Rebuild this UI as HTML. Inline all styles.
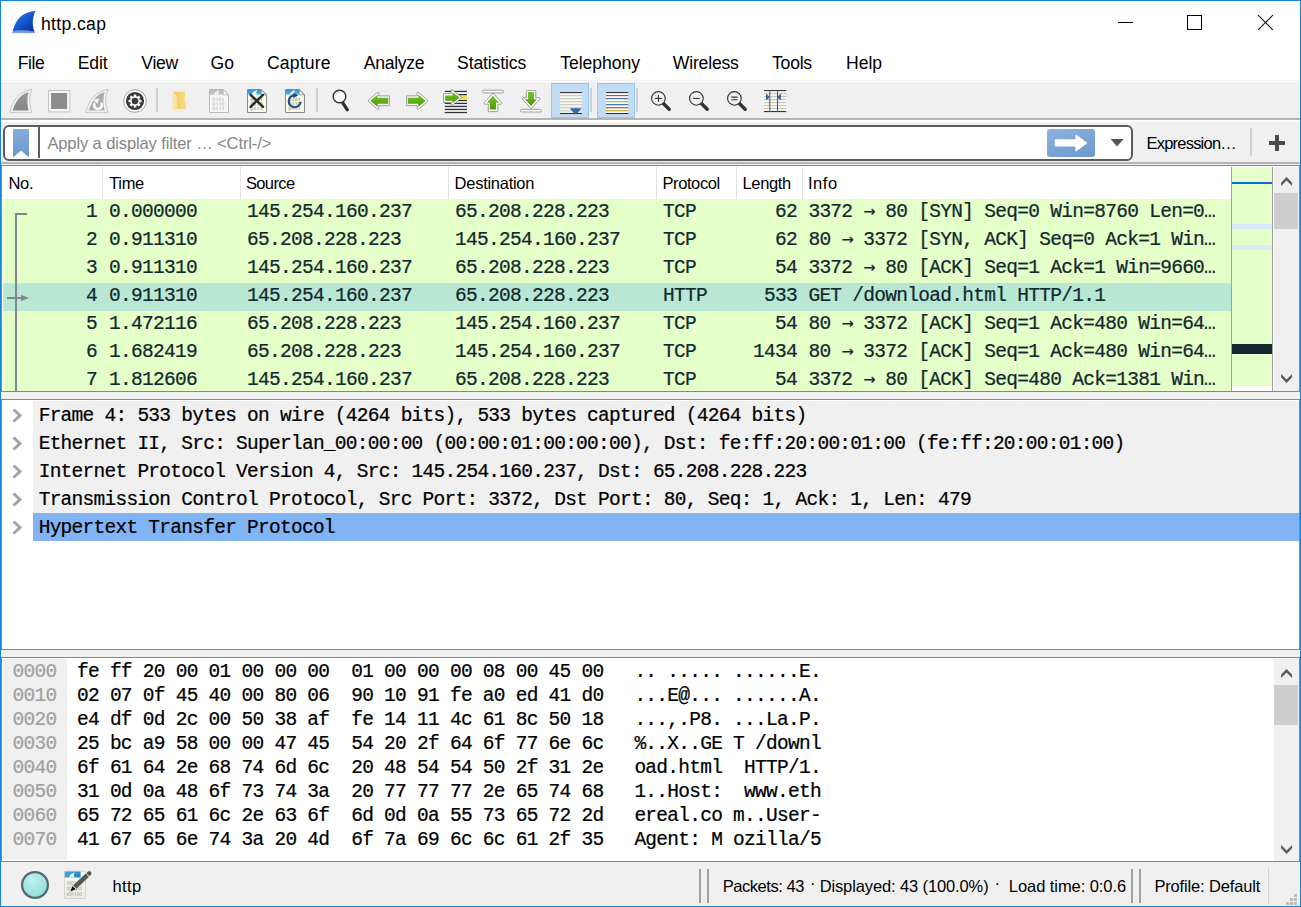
<!DOCTYPE html><html><head><meta charset="utf-8"><title>http.cap</title><style>
*{box-sizing:border-box;margin:0;padding:0}
html,body{width:1301px;height:907px;overflow:hidden;background:#f0f0f0}
body{position:relative;font-family:"Liberation Sans",sans-serif;color:#000}
.abs{position:absolute}
#win{position:absolute;left:0;top:0;width:1301px;height:907px;border:1px solid #1883d7;background:#f0f0f0}
#title{position:absolute;left:1px;top:1px;width:1299px;height:44px;background:#fff}
#menu{position:absolute;left:1px;top:45px;width:1299px;height:36px;background:#fff}
.mt{position:absolute;white-space:pre;font-size:17.6px;line-height:20px}
.ui{position:absolute;white-space:pre;font-size:16.5px;line-height:20px}
.mono{font-family:"Liberation Mono","DejaVu Sans Mono",monospace;font-size:19.5px;letter-spacing:-0.734px;white-space:pre;-webkit-text-stroke:0.22px}
.frame{position:absolute;left:1px;width:1299px;border:1px solid #828790;background:#fff}
.row{position:absolute;left:0;height:28px;line-height:28px}
.prow{position:absolute;left:3px;width:1228px;height:28px;background:#e4ffc7;color:#12272e}
.prow span{position:absolute;top:0;height:28px;line-height:26px}
.prow i{font-style:normal;position:relative;top:-0.5px;font-family:"DejaVu Sans Mono","Liberation Mono",monospace;font-size:20px;line-height:10px;letter-spacing:-1.05px;-webkit-text-stroke:0}
.sep{position:absolute;width:1px;background:#e2e2e2;top:167px;height:32px}
</style></head><body>
<div id="win"></div>
<div id="title"></div>
<span class="mt" style="left:41.0px;top:14px;letter-spacing:0.334px">http.cap</span>
<svg class="abs" style="left:12px;top:11px" width="24" height="23" viewBox="0 0 24 23"><defs><linearGradient id="tig" x1="0.1" y1="0.1" x2="0.9" y2="0.95"><stop offset="0" stop-color="#3488f0"/><stop offset="0.45" stop-color="#1458d0"/><stop offset="1" stop-color="#08309a"/></linearGradient></defs><path d="M23.4 0 C15 0.6 9.5 3.8 6 8.5 C3 12.5 1.2 17 0.4 22 L22.9 22 C20.6 16.5 20.2 11 21.3 6.5 C21.8 4 22.5 2 23.4 0 Z" fill="url(#tig)"/><path d="M0.9 20 C6 18.7 16 19 22.3 20.4 L22.9 22 L0.4 22 Z" fill="#b4cdf0" opacity="0.6"/><path d="M0.4 21.4 L22.8 21.4 L22.9 22.3 L0.3 22.3 Z" fill="#8fb0e4" opacity="0.8"/></svg><div class="abs" style="left:1118px;top:22px;width:15px;height:1px;background:#000"></div>
<div class="abs" style="left:1187px;top:15px;width:15px;height:15px;border:1px solid #000"></div>
<svg class="abs" style="left:1257px;top:14px" width="17" height="17" viewBox="0 0 17 17"><path d="M1 1 L16 16 M16 1 L1 16" stroke="#000" stroke-width="1.05" fill="none"/></svg>
<div id="menu">
</div>
<span class="mt" style="left:17.7px;top:52.5px;letter-spacing:-0.42px">File</span>
<span class="mt" style="left:77.8px;top:52.5px;letter-spacing:-0.18px">Edit</span>
<span class="mt" style="left:141.35px;top:52.5px;letter-spacing:-0.3px">View</span>
<span class="mt" style="left:210.5px;top:52.5px;letter-spacing:0.18px">Go</span>
<span class="mt" style="left:267.0px;top:52.5px;letter-spacing:0.15px">Capture</span>
<span class="mt" style="left:363.85px;top:52.5px;letter-spacing:-0.3px">Analyze</span>
<span class="mt" style="left:457.05px;top:52.5px;letter-spacing:-0.14px">Statistics</span>
<span class="mt" style="left:560.25px;top:52.5px;letter-spacing:-0.044px">Telephony</span>
<span class="mt" style="left:672.85px;top:52.5px;letter-spacing:-0.205px">Wireless</span>
<span class="mt" style="left:772.1px;top:52.5px;letter-spacing:-0.27px">Tools</span>
<span class="mt" style="left:846.05px;top:52.5px;letter-spacing:-0.06px">Help</span>
<div class="abs" style="left:1px;top:80px;width:1299px;height:1px;background:#f0f0f0"></div>
<div class="abs" style="left:1px;top:81px;width:1299px;height:1px;background:#fff"></div>
<div class="abs" style="left:1px;top:118px;width:1299px;height:2px;background:#b5b5b5"></div>
<div class="abs" style="left:1px;top:120px;width:1299px;height:2px;background:#fefefe"></div>
<div class="abs" style="left:1px;top:162px;width:1299px;height:2px;background:#b5b5b5"></div>
<svg class="abs" style="left:9px;top:89px" width="24" height="24" viewBox="0 0 24 24"><defs><linearGradient id="fg1" x1="0" y1="0" x2="0" y2="1"><stop offset="0" stop-color="#9a9a9a"/><stop offset="1" stop-color="#858585"/></linearGradient></defs><path d="M23 0.3 C11.5 2.4 3.6 10.5 0.8 23.4 L23 23.4 C20 15.5 19.8 8 23 0.3 Z" fill="#f4f4f4" stroke="#c4c4c4" stroke-width="1"/><path d="M19.6 2.9 C12 5.2 6.4 11.8 3.8 21.4 L19.6 21.4 C18 15 18 8.8 19.6 2.9 Z" fill="url(#fg1)"/></svg>
<svg class="abs" style="left:48px;top:90px" width="24" height="24" viewBox="0 0 24 24"><rect x="0.5" y="0.5" width="21.4" height="21.4" fill="#f6f6f6" stroke="#c6c6c6"/><rect x="3.1" y="3" width="16" height="16" fill="#8c8c8c"/></svg>
<svg class="abs" style="left:85px;top:89px" width="24" height="24" viewBox="0 0 24 24"><path d="M23 0.3 C11.5 2.4 3.6 10.5 0.8 23.4 L23 23.4 C20 15.5 19.8 8 23 0.3 Z" fill="#f4f4f4" stroke="#c4c4c4" stroke-width="1"/><path d="M19.6 2.9 C12 5.2 6.4 11.8 3.8 21.4 L19.6 21.4 C18 15 18 8.8 19.6 2.9 Z" fill="#ababab"/><path d="M15.87 13.79 A3.75 3.75 0 1 1 9.93 14.05" fill="none" stroke="#f8f8f8" stroke-width="2.7"/><path d="M7.4 10.9 L14 9.4 L12.9 14.6 Z" fill="#f8f8f8"/></svg>
<svg class="abs" style="left:123px;top:89px" width="24" height="24" viewBox="0 0 24 24"><circle cx="12" cy="12" r="11.3" fill="#fdfdfd" stroke="#9a9a9a" stroke-width="0.9"/><circle cx="12" cy="12" r="9.1" fill="#3a3a3a"/><rect  x="10.75"  y="5.5" width="2.5" height="3.4" rx="0.5" fill="#fff" transform="rotate(0 12.0 12.0)"/><rect  x="10.75"  y="5.5" width="2.5" height="3.4" rx="0.5" fill="#fff" transform="rotate(45 12.0 12.0)"/><rect  x="10.75"  y="5.5" width="2.5" height="3.4" rx="0.5" fill="#fff" transform="rotate(90 12.0 12.0)"/><rect  x="10.75"  y="5.5" width="2.5" height="3.4" rx="0.5" fill="#fff" transform="rotate(135 12.0 12.0)"/><rect  x="10.75"  y="5.5" width="2.5" height="3.4" rx="0.5" fill="#fff" transform="rotate(180 12.0 12.0)"/><rect  x="10.75"  y="5.5" width="2.5" height="3.4" rx="0.5" fill="#fff" transform="rotate(225 12.0 12.0)"/><rect  x="10.75"  y="5.5" width="2.5" height="3.4" rx="0.5" fill="#fff" transform="rotate(270 12.0 12.0)"/><rect  x="10.75"  y="5.5" width="2.5" height="3.4" rx="0.5" fill="#fff" transform="rotate(315 12.0 12.0)"/><circle cx="12" cy="12" r="4.8" fill="#fff"/><circle cx="12" cy="12" r="3.3" fill="#3a3a3a"/></svg>
<div class="abs" style="left:156px;top:88px;width:2px;height:24px;background:#cfcfcf"></div>
<svg class="abs" style="left:172px;top:91px" width="15" height="22" viewBox="0 0 15 22"><defs><linearGradient id="fdg" x1="0" y1="0" x2="1" y2="0"><stop offset="0" stop-color="#efcb60"/><stop offset="1" stop-color="#fbdc7e"/></linearGradient></defs><path d="M0.9 0.8 L12.9 0.8 L12.9 11.2 L14 11.2 L14 17.9 L0.9 17.9 Z" fill="url(#fdg)"/><path d="M0.9 1 L4.9 4.4 L4.9 17.7 L4.1 20.9 L0.9 18.4 Z" fill="#fbe59e"/></svg>
<svg class="abs" style="left:209px;top:89px" width="20" height="24" viewBox="0 0 20 24"><defs><linearGradient id="svg" x1="0" y1="0" x2="0" y2="1"><stop offset="0" stop-color="#b6b6b6"/><stop offset="1" stop-color="#c6c6c6"/></linearGradient><clipPath id="svc"><path d="M0.5 0.5 L14.2 0.5 L19.5 5.8 L19.5 23.5 L0.5 23.5 Z"/></clipPath></defs><path d="M0.5 0.5 L14.2 0.5 L19.5 5.8 L19.5 23.5 L0.5 23.5 Z" fill="#f6f6f6"/><g clip-path="url(#svc)"><rect x="0" y="0" width="20" height="5.6" fill="url(#svg)"/><path d="M4.6 5.6 C5.6 3.2 7.6 1.6 10.2 0.9 C9.2 2.6 9.2 4.2 10 5.6 Z" fill="#f6f6f6"/></g><path d="M14.2 0.5 L14.2 5.8 L19.5 5.8 Z" fill="#fdfdfd" stroke="#b9b9b9" stroke-width="0.8"/><rect x="4.0" y="8.9" width="1.9" height="3" rx="0.8" fill="none" stroke="#bcbcbc" stroke-width="0.7" opacity="1"/><rect x="7.6499999999999995" y="8.700000000000001" width="0.8" height="3.4" fill="#bcbcbc" opacity="1"/><rect x="10.1" y="8.9" width="1.9" height="3" rx="0.8" fill="none" stroke="#bcbcbc" stroke-width="0.7" opacity="1"/><rect x="13.749999999999998" y="8.700000000000001" width="0.8" height="3.4" fill="#bcbcbc" opacity="1"/><rect x="4.0" y="13.4" width="1.9" height="3" rx="0.8" fill="none" stroke="#bcbcbc" stroke-width="0.7" opacity="1"/><rect x="7.6499999999999995" y="13.200000000000001" width="0.8" height="3.4" fill="#bcbcbc" opacity="1"/><rect x="10.7" y="13.200000000000001" width="0.8" height="3.4" fill="#bcbcbc" opacity="1"/><rect x="13.149999999999999" y="13.4" width="1.9" height="3" rx="0.8" fill="none" stroke="#bcbcbc" stroke-width="0.7" opacity="1"/><rect x="4.0" y="17.9" width="1.9" height="3" rx="0.8" fill="none" stroke="#bcbcbc" stroke-width="0.7" opacity="1"/><rect x="7.6499999999999995" y="17.7" width="0.8" height="3.4" fill="#bcbcbc" opacity="1"/><rect x="10.7" y="17.7" width="0.8" height="3.4" fill="#bcbcbc" opacity="1"/><rect x="13.749999999999998" y="17.7" width="0.8" height="3.4" fill="#bcbcbc" opacity="1"/><path d="M0.5 0.5 L14.2 0.5 L19.5 5.8 L19.5 23.5 L0.5 23.5 Z" fill="none" stroke="#b9b9b9" stroke-width="1"/></svg>
<svg class="abs" style="left:247px;top:89px" width="20" height="24" viewBox="0 0 20 24"><defs><linearGradient id="clg" x1="0" y1="0" x2="0" y2="1"><stop offset="0" stop-color="#2a8bd6"/><stop offset="1" stop-color="#57b0ea"/></linearGradient><clipPath id="clc"><path d="M0.5 0.5 L14.2 0.5 L19.5 5.8 L19.5 23.5 L0.5 23.5 Z"/></clipPath></defs><path d="M0.5 0.5 L14.2 0.5 L19.5 5.8 L19.5 23.5 L0.5 23.5 Z" fill="#fbfbea"/><g clip-path="url(#clc)"><rect x="0" y="0" width="20" height="5.6" fill="url(#clg)"/><path d="M4.6 5.6 C5.6 3.2 7.6 1.6 10.2 0.9 C9.2 2.6 9.2 4.2 10 5.6 Z" fill="#fbfbea"/></g><path d="M14.2 0.5 L14.2 5.8 L19.5 5.8 Z" fill="#fdfdfd" stroke="#8a8a86" stroke-width="0.8"/><rect x="4.0" y="8.9" width="1.9" height="3" rx="0.8" fill="none" stroke="#9a9a90" stroke-width="0.7" opacity="1"/><rect x="7.6499999999999995" y="8.700000000000001" width="0.8" height="3.4" fill="#9a9a90" opacity="1"/><rect x="10.1" y="8.9" width="1.9" height="3" rx="0.8" fill="none" stroke="#9a9a90" stroke-width="0.7" opacity="1"/><rect x="13.749999999999998" y="8.700000000000001" width="0.8" height="3.4" fill="#9a9a90" opacity="1"/><rect x="4.0" y="13.4" width="1.9" height="3" rx="0.8" fill="none" stroke="#9a9a90" stroke-width="0.7" opacity="1"/><rect x="7.6499999999999995" y="13.200000000000001" width="0.8" height="3.4" fill="#9a9a90" opacity="1"/><rect x="10.7" y="13.200000000000001" width="0.8" height="3.4" fill="#9a9a90" opacity="1"/><rect x="13.149999999999999" y="13.4" width="1.9" height="3" rx="0.8" fill="none" stroke="#9a9a90" stroke-width="0.7" opacity="1"/><rect x="4.0" y="17.9" width="1.9" height="3" rx="0.8" fill="none" stroke="#9a9a90" stroke-width="0.7" opacity="1"/><rect x="7.6499999999999995" y="17.7" width="0.8" height="3.4" fill="#9a9a90" opacity="1"/><rect x="10.7" y="17.7" width="0.8" height="3.4" fill="#9a9a90" opacity="1"/><rect x="13.749999999999998" y="17.7" width="0.8" height="3.4" fill="#9a9a90" opacity="1"/><path d="M0.5 0.5 L14.2 0.5 L19.5 5.8 L19.5 23.5 L0.5 23.5 Z" fill="none" stroke="#8a8a86" stroke-width="1"/><path d="M3.6 5.8 L16 17.8 M16 5.8 L3.6 17.8" stroke="#2a2e30" stroke-width="2.5" stroke-linecap="round"/></svg>
<svg class="abs" style="left:285px;top:89px" width="20" height="24" viewBox="0 0 20 24"><defs><linearGradient id="rlg" x1="0" y1="0" x2="0" y2="1"><stop offset="0" stop-color="#2a8bd6"/><stop offset="1" stop-color="#57b0ea"/></linearGradient><clipPath id="rlc"><path d="M0.5 0.5 L14.2 0.5 L19.5 5.8 L19.5 23.5 L0.5 23.5 Z"/></clipPath></defs><path d="M0.5 0.5 L14.2 0.5 L19.5 5.8 L19.5 23.5 L0.5 23.5 Z" fill="#fbfbea"/><g clip-path="url(#rlc)"><rect x="0" y="0" width="20" height="5.6" fill="url(#rlg)"/><path d="M4.6 5.6 C5.6 3.2 7.6 1.6 10.2 0.9 C9.2 2.6 9.2 4.2 10 5.6 Z" fill="#fbfbea"/></g><path d="M14.2 0.5 L14.2 5.8 L19.5 5.8 Z" fill="#fdfdfd" stroke="#8a8a86" stroke-width="0.8"/><rect x="4.0" y="8.9" width="1.9" height="3" rx="0.8" fill="none" stroke="#9a9a90" stroke-width="0.7" opacity="1"/><rect x="7.6499999999999995" y="8.700000000000001" width="0.8" height="3.4" fill="#9a9a90" opacity="1"/><rect x="10.1" y="8.9" width="1.9" height="3" rx="0.8" fill="none" stroke="#9a9a90" stroke-width="0.7" opacity="1"/><rect x="13.749999999999998" y="8.700000000000001" width="0.8" height="3.4" fill="#9a9a90" opacity="1"/><rect x="4.0" y="13.4" width="1.9" height="3" rx="0.8" fill="none" stroke="#9a9a90" stroke-width="0.7" opacity="1"/><rect x="7.6499999999999995" y="13.200000000000001" width="0.8" height="3.4" fill="#9a9a90" opacity="1"/><rect x="10.7" y="13.200000000000001" width="0.8" height="3.4" fill="#9a9a90" opacity="1"/><rect x="13.149999999999999" y="13.4" width="1.9" height="3" rx="0.8" fill="none" stroke="#9a9a90" stroke-width="0.7" opacity="1"/><rect x="4.0" y="17.9" width="1.9" height="3" rx="0.8" fill="none" stroke="#9a9a90" stroke-width="0.7" opacity="1"/><rect x="7.6499999999999995" y="17.7" width="0.8" height="3.4" fill="#9a9a90" opacity="1"/><rect x="10.7" y="17.7" width="0.8" height="3.4" fill="#9a9a90" opacity="1"/><rect x="13.749999999999998" y="17.7" width="0.8" height="3.4" fill="#9a9a90" opacity="1"/><path d="M0.5 0.5 L14.2 0.5 L19.5 5.8 L19.5 23.5 L0.5 23.5 Z" fill="none" stroke="#8a8a86" stroke-width="1"/><path d="M15.68 12.72 A6 6 0 1 1 9.4 6.2" fill="none" stroke="#204a87" stroke-width="2.1"/><path d="M8.4 3.4 L13.2 6.6 L8 9 Z" fill="#204a87"/></svg>
<div class="abs" style="left:316px;top:88px;width:2px;height:24px;background:#cfcfcf"></div>
<svg class="abs" style="left:331px;top:88px" width="22" height="25" viewBox="0 0 22 25"><path d="M11.6 14.6 L16.2 21.6" stroke="#2e3436" stroke-width="3.4" stroke-linecap="round"/><circle cx="8.5" cy="8.5" r="6.3" fill="#fbfbfb" stroke="#2e3436" stroke-width="1.4"/><path d="M4.6 7.4 A4.2 4.2 0 0 1 8.2 4.3" fill="none" stroke="#cfcfcf" stroke-width="1"/></svg>
<svg class="abs" style="left:368px;top:91px" width="23" height="20" viewBox="0 0 23 20"><defs><linearGradient id="alg" x1="0" y1="0" x2="0" y2="1"><stop offset="0" stop-color="#76c32c"/><stop offset="1" stop-color="#4e9a06"/></linearGradient></defs><g transform="translate(22,0) scale(-1,1)"><path d="M0.6 4.9 L11.2 4.9 L11.2 1.6 Q11.4 0.6 12.4 1.4 L21.6 9.1 Q22.2 9.8 21.6 10.4 L12.4 18.2 Q11.4 18.9 11.2 17.9 L11.2 14.7 L0.6 14.7 Z" fill="#fff" stroke="#909090" stroke-width="0.9" stroke-linejoin="round"/><path d="M1.8 6.8 L12.3 6.8 L12.3 3.5 L19.8 9.75 L12.3 16 L12.3 12.8 L1.8 12.8 Z" fill="url(#alg)"/></g></svg>
<svg class="abs" style="left:406px;top:91px" width="23" height="20" viewBox="0 0 23 20"><defs><linearGradient id="arg" x1="0" y1="0" x2="0" y2="1"><stop offset="0" stop-color="#76c32c"/><stop offset="1" stop-color="#4e9a06"/></linearGradient></defs><g><path d="M0.6 4.9 L11.2 4.9 L11.2 1.6 Q11.4 0.6 12.4 1.4 L21.6 9.1 Q22.2 9.8 21.6 10.4 L12.4 18.2 Q11.4 18.9 11.2 17.9 L11.2 14.7 L0.6 14.7 Z" fill="#fff" stroke="#909090" stroke-width="0.9" stroke-linejoin="round"/><path d="M1.8 6.8 L12.3 6.8 L12.3 3.5 L19.8 9.75 L12.3 16 L12.3 12.8 L1.8 12.8 Z" fill="url(#arg)"/></g></svg>
<svg class="abs" style="left:443px;top:89px" width="25" height="25" viewBox="0 0 25 25"><rect x="1.8" y="1.7999999999999998" width="22.2" height="1.25" fill="#2e3436"/><rect x="1.8" y="5.0" width="22.2" height="1.25" fill="#2e3436"/><rect x="1.8" y="7.9" width="22.2" height="1.25" fill="#2e3436"/><rect x="1.8" y="10.9" width="22.2" height="1.25" fill="#2e3436"/><rect x="1.8" y="13.8" width="22.2" height="1.25" fill="#2e3436"/><rect x="1.8" y="16.799999999999997" width="22.2" height="1.25" fill="#2e3436"/><rect x="1.8" y="19.799999999999997" width="22.2" height="1.25" fill="#2e3436"/><rect x="1.8" y="22.9" width="22.2" height="1.25" fill="#2e3436"/><rect x="14" y="7.2" width="10" height="2.6" fill="#f7e03c"/><defs><linearGradient id="gtg" x1="0" y1="0" x2="0" y2="1"><stop offset="0" stop-color="#76c32c"/><stop offset="1" stop-color="#4e9a06"/></linearGradient></defs><path d="M0.5 4.7 L8.2 4.7 L8.2 1.2 Q8.4 0.2 9.4 0.9 L18.3 7.9 Q18.9 8.5 18.3 9.1 L9.4 16.2 Q8.4 16.9 8.2 15.9 L8.2 13.6 L0.5 13.6 Z" fill="#fff" stroke="#909090" stroke-width="0.9" stroke-linejoin="round"/><path d="M2.2 6.5 L9.4 6.5 L9.4 3 L16.8 8.5 L9.4 14.2 L9.4 11.7 L2.2 11.7 Z" fill="url(#gtg)"/></svg>
<svg class="abs" style="left:482px;top:89px" width="22" height="24" viewBox="0 0 22 24"><defs><linearGradient id="gfg" x1="0" y1="0" x2="0" y2="1"><stop offset="0" stop-color="#76c32c"/><stop offset="1" stop-color="#4e9a06"/></linearGradient></defs><path d="M10.9 4 L19.8 13.6 Q20.4 15.2 19 15.2 L15.9 15.2 L15.9 21.8 Q15.9 22.7 15 22.7 L7.2 22.7 Q6.3 22.7 6.3 21.8 L6.3 15.2 L3 15.2 Q1.6 15.2 2.2 13.6 Z" fill="#fff" stroke="#909090" stroke-width="0.9" stroke-linejoin="round"/><path d="M10.9 6.8 L17 13.7 L14.1 13.7 L14.1 20.6 L7.8 20.6 L7.8 13.7 L4.9 13.7 Z" fill="url(#gfg)"/><rect x="0.5" y="1.2" width="21" height="2.7" rx="1.35" fill="#fff" stroke="#909090" stroke-width="0.9"/></svg>
<svg class="abs" style="left:520px;top:90px" width="22" height="23" viewBox="0 0 22 23"><defs><linearGradient id="glg" x1="0" y1="0" x2="0" y2="1"><stop offset="0" stop-color="#76c32c"/><stop offset="1" stop-color="#4e9a06"/></linearGradient></defs><path d="M7.2 0.4 L14.9 0.4 Q15.8 0.4 15.8 1.3 L15.8 7.8 L19 7.8 Q20.4 7.8 19.8 9.2 L11.1 18.6 L2.4 9.2 Q1.8 7.8 3.2 7.8 L6.3 7.8 L6.3 1.3 Q6.3 0.4 7.2 0.4 Z" fill="#fff" stroke="#909090" stroke-width="0.9" stroke-linejoin="round"/><path d="M8.1 2.1 L13.9 2.1 L13.9 9.2 L17.1 9.2 L11.1 16 L4.9 9.2 L8.1 9.2 Z" fill="url(#glg)"/><rect x="0.5" y="19.3" width="21" height="2.7" rx="1.35" fill="#fff" stroke="#909090" stroke-width="0.9"/></svg>
<div class="abs" style="left:551px;top:83px;width:38px;height:35px;background:#c2dcf3;border:1px solid #90c8f6"></div>
<svg class="abs" style="left:560px;top:91px" width="22" height="24" viewBox="0 0 22 24"><rect x="0" y="1" width="22" height="21.4" fill="#f6f6f4"/><rect x="0" y="1.05" width="22" height="1.1" fill="#2e3436"/><rect x="0" y="4.05" width="22" height="1.1" fill="#c6c6bc"/><rect x="0" y="7.1000000000000005" width="22" height="1.1" fill="#c6c6bc"/><rect x="0" y="10.149999999999999" width="22" height="1.1" fill="#c6c6bc"/><rect x="0" y="13.149999999999999" width="22" height="1.1" fill="#c6c6bc"/><rect x="0" y="16.2" width="22" height="1.1" fill="#c6c6bc"/><rect x="0" y="19.25" width="22" height="1.1" fill="#c6c6bc"/><rect x="0" y="21.95" width="22" height="1.1" fill="#2e3436"/><path d="M10.1 17.2 L21.3 17.2 C20.6 19.4 18.4 19.8 17.4 22.6 L14 22.6 C13 19.8 10.8 19.4 10.1 17.2 Z" fill="#3465a4"/></svg>
<div class="abs" style="left:590px;top:88px;width:2px;height:24px;background:#cfcfcf"></div>
<div class="abs" style="left:597px;top:83px;width:38px;height:35px;background:#c2dcf3;border:1px solid #90c8f6"></div>
<svg class="abs" style="left:606px;top:91px" width="23" height="24" viewBox="0 0 23 24"><rect x="0" y="1" width="22.4" height="21.4" fill="#fff"/><rect x="0" y="1.05" width="22.4" height="1.1" fill="#2e3436"/><rect x="0" y="4.05" width="22.4" height="1.1" fill="#ef2929"/><rect x="0" y="7.1000000000000005" width="22.4" height="1.1" fill="#3465a4"/><rect x="0" y="10.149999999999999" width="22.4" height="1.1" fill="#73d216"/><rect x="0" y="13.149999999999999" width="22.4" height="1.1" fill="#3465a4"/><rect x="0" y="16.2" width="22.4" height="1.1" fill="#75507b"/><rect x="0" y="19.25" width="22.4" height="1.1" fill="#c4a000"/><rect x="0" y="21.95" width="22.4" height="1.1" fill="#2e3436"/></svg>
<div class="abs" style="left:636px;top:88px;width:2px;height:24px;background:#cfcfcf"></div>
<svg class="abs" style="left:650px;top:90px" width="22" height="24" viewBox="0 0 22 24"><path d="M13.2 13.2 L19.2 19.2" stroke="#2e3436" stroke-width="3.4" stroke-linecap="round"/><circle cx="8.4" cy="8.4" r="6.8" fill="#f2f2f2" stroke="#2e3436" stroke-width="1.15"/><path d="M5 8.4 L11.8 8.4" stroke="#2e3436" stroke-width="1.1"/><path d="M8.4 5 L8.4 11.8" stroke="#2e3436" stroke-width="1.1"/></svg>
<svg class="abs" style="left:688px;top:90px" width="22" height="24" viewBox="0 0 22 24"><path d="M13.2 13.2 L19.2 19.2" stroke="#2e3436" stroke-width="3.4" stroke-linecap="round"/><circle cx="8.4" cy="8.4" r="6.8" fill="#f2f2f2" stroke="#2e3436" stroke-width="1.15"/><path d="M5 8.4 L11.8 8.4" stroke="#2e3436" stroke-width="1.1"/></svg>
<svg class="abs" style="left:726px;top:90px" width="22" height="24" viewBox="0 0 22 24"><path d="M13.2 13.2 L19.2 19.2" stroke="#2e3436" stroke-width="3.4" stroke-linecap="round"/><circle cx="8.4" cy="8.4" r="6.8" fill="#f2f2f2" stroke="#2e3436" stroke-width="1.15"/><path d="M5.2 7.1 L11.6 7.1 M5.2 9.8 L11.6 9.8" stroke="#2e3436" stroke-width="1.1"/></svg>
<svg class="abs" style="left:764px;top:89px" width="23" height="24" viewBox="0 0 23 24"><rect x="0" y="1" width="22.2" height="21.6" fill="#f6f6f4"/><rect x="0" y="3.95" width="22.2" height="1.1" fill="#c6c6bc"/><rect x="0" y="7.0" width="22.2" height="1.1" fill="#c6c6bc"/><rect x="0" y="10.0" width="22.2" height="1.1" fill="#c6c6bc"/><rect x="0" y="13.0" width="22.2" height="1.1" fill="#c6c6bc"/><rect x="0" y="16.0" width="22.2" height="1.1" fill="#c6c6bc"/><rect x="0" y="18.95" width="22.2" height="1.1" fill="#c6c6bc"/><rect x="0" y="1" width="22.2" height="1.1" fill="#2e3436"/><rect x="0" y="22" width="22.2" height="1.1" fill="#2e3436"/><rect x="5.3" y="1" width="1" height="22" fill="#555753"/><rect x="13" y="1" width="1" height="22" fill="#555753"/><path d="M2 4.9 Q3 4.7 5.7 7.9 Q3 11.2 2 11 Z" fill="#3465a4"/><path d="M16.9 4.9 Q15.9 4.7 13.2 7.9 Q15.9 11.2 16.9 11 Z" fill="#3465a4"/></svg>
<div class="abs" style="left:3px;top:125px;width:1130px;height:36px;border:2px solid #5c5c5c;border-radius:6px;background:#fff"></div>
<div class="abs" style="left:38px;top:127px;width:2px;height:31px;background:#5c5c5c"></div>
<span class="ui" style="left:47.4px;top:133px;letter-spacing:-0.108px;color:#858585">Apply a display filter … &lt;Ctrl-/&gt;</span>
<span class="ui" style="left:1146.45px;top:133px;letter-spacing:-0.774px">Expression…</span>
<svg class="abs" style="left:13px;top:129px" width="16" height="28" viewBox="0 0 16 28"><defs><linearGradient id="bkg" x1="0" y1="0" x2="0" y2="1"><stop offset="0" stop-color="#86acd9"/><stop offset="1" stop-color="#6c98cd"/></linearGradient></defs><path d="M1.2 0 L14.8 0 Q16 0 16 1.2 L16 27 Q16 28.4 14.8 27.4 L8 21.6 L1.2 27.4 Q0 28.4 0 27 L0 1.2 Q0 0 1.2 0 Z" fill="url(#bkg)"/></svg>
<div class="abs" style="left:1047px;top:129px;width:48px;height:28px;border-radius:3px;background:linear-gradient(160deg,#8eb2dd,#6c98ce)"></div>
<svg class="abs" style="left:1054px;top:133px" width="35" height="20" viewBox="0 0 35 20"><path d="M1.6 6.2 L21.4 6.2 L21.4 2.6 Q21.4 1.2 22.6 2 L32.6 9.2 Q33.6 10 32.6 10.8 L22.6 18 Q21.4 18.8 21.4 17.4 L21.4 13.6 L1.6 13.6 Q0.8 13.6 0.8 12.8 L0.8 7 Q0.8 6.2 1.6 6.2 Z" fill="#fff"/></svg>
<svg class="abs" style="left:1110px;top:139px" width="15" height="8" viewBox="0 0 15 8"><path d="M0.6 0 L13.6 0 L7.1 7.4 Z" fill="#555753"/></svg>
<div class="abs" style="left:1250px;top:128px;width:2px;height:28px;background:#d0d0d0"></div>
<div class="abs" style="left:1269px;top:141px;width:16px;height:4px;background:#4a4a4a"></div>
<div class="abs" style="left:1275px;top:135px;width:4px;height:16px;background:#4a4a4a"></div>
<div class="frame" style="top:165px;height:227px"></div>
<span class="ui" style="left:8.45px;top:173px;letter-spacing:-0.27px">No.</span>
<span class="ui" style="left:109.15px;top:173px;letter-spacing:-0.3px">Time</span>
<span class="ui" style="left:245.9px;top:173px;letter-spacing:-0.612px">Source</span>
<span class="ui" style="left:454.62px;top:173px;letter-spacing:-0.271px">Destination</span>
<span class="ui" style="left:662.5px;top:173px;letter-spacing:-0.411px">Protocol</span>
<span class="ui" style="left:742.45px;top:173px;letter-spacing:-0.324px">Length</span>
<span class="ui" style="left:807.95px;top:173px;letter-spacing:0.54px">Info</span>
<div class="sep" style="left:102px"></div>
<div class="sep" style="left:240px"></div>
<div class="sep" style="left:448px"></div>
<div class="sep" style="left:656px"></div>
<div class="sep" style="left:736px"></div>
<div class="sep" style="left:802px"></div>
<div class="abs mono" style="left:0;top:0;width:1301px;height:391px;overflow:hidden;letter-spacing:-0.71px">
<div class="prow" style="top:199px"><span style="left:0;width:94px;text-align:right">1</span><span style="left:106px">0.000000</span><span style="left:244px">145.254.160.237</span><span style="left:452px">65.208.228.223</span><span style="left:660px">TCP</span><span style="left:733px;width:61px;text-align:right">62</span><span style="left:805.4px">3372 <i>→</i> 80 [SYN] Seq=0 Win=8760 Len=0…</span></div>
<div class="prow" style="top:227px"><span style="left:0;width:94px;text-align:right">2</span><span style="left:106px">0.911310</span><span style="left:244px">65.208.228.223</span><span style="left:452px">145.254.160.237</span><span style="left:660px">TCP</span><span style="left:733px;width:61px;text-align:right">62</span><span style="left:805.4px">80 <i>→</i> 3372 [SYN, ACK] Seq=0 Ack=1 Win…</span></div>
<div class="prow" style="top:255px"><span style="left:0;width:94px;text-align:right">3</span><span style="left:106px">0.911310</span><span style="left:244px">145.254.160.237</span><span style="left:452px">65.208.228.223</span><span style="left:660px">TCP</span><span style="left:733px;width:61px;text-align:right">54</span><span style="left:805.4px">3372 <i>→</i> 80 [ACK] Seq=1 Ack=1 Win=9660…</span></div>
<div class="prow" style="top:283px;background:#b8e8d3"><span style="left:0;width:94px;text-align:right">4</span><span style="left:106px">0.911310</span><span style="left:244px">145.254.160.237</span><span style="left:452px">65.208.228.223</span><span style="left:660px">HTTP</span><span style="left:733px;width:61px;text-align:right">533</span><span style="left:805.4px">GET /download.html HTTP/1.1</span></div>
<div class="prow" style="top:311px"><span style="left:0;width:94px;text-align:right">5</span><span style="left:106px">1.472116</span><span style="left:244px">65.208.228.223</span><span style="left:452px">145.254.160.237</span><span style="left:660px">TCP</span><span style="left:733px;width:61px;text-align:right">54</span><span style="left:805.4px">80 <i>→</i> 3372 [ACK] Seq=1 Ack=480 Win=64…</span></div>
<div class="prow" style="top:339px"><span style="left:0;width:94px;text-align:right">6</span><span style="left:106px">1.682419</span><span style="left:244px">65.208.228.223</span><span style="left:452px">145.254.160.237</span><span style="left:660px">TCP</span><span style="left:733px;width:61px;text-align:right">1434</span><span style="left:805.4px">80 <i>→</i> 3372 [ACK] Seq=1 Ack=480 Win=64…</span></div>
<div class="prow" style="top:367px"><span style="left:0;width:94px;text-align:right">7</span><span style="left:106px">1.812606</span><span style="left:244px">145.254.160.237</span><span style="left:452px">65.208.228.223</span><span style="left:660px">TCP</span><span style="left:733px;width:61px;text-align:right">54</span><span style="left:805.4px">3372 <i>→</i> 80 [ACK] Seq=480 Ack=1381 Win…</span></div>
</div>
<div class="abs" style="left:15px;top:213px;width:2px;height:178px;background:#82878f"></div>
<div class="abs" style="left:15px;top:213px;width:12px;height:2px;background:#82878f"></div>
<div class="abs" style="left:7px;top:297px;width:15px;height:2px;background:#82878f"></div>
<svg class="abs" style="left:21px;top:294px" width="9" height="8" viewBox="0 0 9 8"><path d="M0 0.9 L8.2 4 L0 7.1 Z" fill="#82878f"/></svg>
<div class="abs" style="left:1231px;top:167px;width:42px;height:224px;background:#e4ffc7;border-left:1px solid #a0a0a0;border-right:1px solid #a0a0a0"></div>
<div class="abs" style="left:1232px;top:182px;width:40px;height:2px;background:#0a6ad6"></div>
<div class="abs" style="left:1232px;top:224px;width:40px;height:5px;background:#daecfb"></div>
<div class="abs" style="left:1232px;top:245px;width:40px;height:5px;background:#daecfb"></div>
<div class="abs" style="left:1232px;top:344px;width:40px;height:10px;background:#12272e"></div>
<div class="abs" style="left:1232px;top:386px;width:40px;height:5px;background:#fff"></div>
<div class="abs" style="left:1273px;top:167px;width:1px;height:224px;background:#fff"></div>
<div class="abs" style="left:1274px;top:167px;width:25px;height:224px;background:#f0f0f0"></div>
<div class="abs" style="left:1274px;top:193px;width:24px;height:36px;background:#cdcdcd"></div>
<svg class="abs" style="left:1280px;top:176px" width="14" height="11" viewBox="0 0 14 11"><path d="M6.6 0.9 L12.1 6.7 L12.1 9.9 L6.6 4.6 L1.1 9.9 L1.1 6.7 Z" fill="#5a5a5a"/></svg>
<svg class="abs" style="left:1280px;top:373px" width="14" height="11" viewBox="0 0 14 11"><path d="M6.6 10.1 L12.1 4.3 L12.1 1.1 L6.6 6.4 L1.1 1.1 L1.1 4.3 Z" fill="#5a5a5a"/></svg>
<div class="frame" style="top:399px;height:251px"></div>
<div class="abs mono" style="left:33px;top:401px;width:1266px;height:28px;line-height:28px;background:#f0f0f0;padding-left:5.7px;padding-top:1px">Frame 4: 533 bytes on wire (4264 bits), 533 bytes captured (4264 bits)</div>
<svg class="abs" style="left:10px;top:406px" width="14" height="18" viewBox="0 0 14 18"><path d="M3.5 3.5 L10 9.5 L3.5 15.5" fill="none" stroke="#a0a0a0" stroke-width="2.9"/></svg>
<div class="abs mono" style="left:33px;top:429px;width:1266px;height:28px;line-height:28px;background:#f0f0f0;padding-left:5.7px;padding-top:1px">Ethernet II, Src: Superlan_00:00:00 (00:00:01:00:00:00), Dst: fe:ff:20:00:01:00 (fe:ff:20:00:01:00)</div>
<svg class="abs" style="left:10px;top:434px" width="14" height="18" viewBox="0 0 14 18"><path d="M3.5 3.5 L10 9.5 L3.5 15.5" fill="none" stroke="#a0a0a0" stroke-width="2.9"/></svg>
<div class="abs mono" style="left:33px;top:457px;width:1266px;height:28px;line-height:28px;background:#f0f0f0;padding-left:5.7px;padding-top:1px">Internet Protocol Version 4, Src: 145.254.160.237, Dst: 65.208.228.223</div>
<svg class="abs" style="left:10px;top:462px" width="14" height="18" viewBox="0 0 14 18"><path d="M3.5 3.5 L10 9.5 L3.5 15.5" fill="none" stroke="#a0a0a0" stroke-width="2.9"/></svg>
<div class="abs mono" style="left:33px;top:485px;width:1266px;height:28px;line-height:28px;background:#f0f0f0;padding-left:5.7px;padding-top:1px">Transmission Control Protocol, Src Port: 3372, Dst Port: 80, Seq: 1, Ack: 1, Len: 479</div>
<svg class="abs" style="left:10px;top:490px" width="14" height="18" viewBox="0 0 14 18"><path d="M3.5 3.5 L10 9.5 L3.5 15.5" fill="none" stroke="#a0a0a0" stroke-width="2.9"/></svg>
<div class="abs mono" style="left:33px;top:513px;width:1266px;height:28px;line-height:28px;background:#80b4f5;padding-left:5.7px;padding-top:1px">Hypertext Transfer Protocol</div>
<svg class="abs" style="left:10px;top:518px" width="14" height="18" viewBox="0 0 14 18"><path d="M3.5 3.5 L10 9.5 L3.5 15.5" fill="none" stroke="#a0a0a0" stroke-width="2.9"/></svg>
<div class="frame" style="top:657px;height:205px"></div>
<div class="abs" style="left:3px;top:659px;width:64px;height:201px;background:#f0f0f0"></div>
<div class="abs mono" style="left:12.6px;top:660px;height:24px;line-height:24px;color:#a0a0a0">0000</div>
<div class="abs mono" style="left:77px;top:660px;height:24px;line-height:24px">fe ff 20 00 01 00 00 00  01 00 00 00 08 00 45 00</div>
<div class="abs mono" style="left:634.4px;top:660px;height:24px;line-height:24px">.. ..... ......E.</div>
<div class="abs mono" style="left:12.6px;top:684px;height:24px;line-height:24px;color:#a0a0a0">0010</div>
<div class="abs mono" style="left:77px;top:684px;height:24px;line-height:24px">02 07 0f 45 40 00 80 06  90 10 91 fe a0 ed 41 d0</div>
<div class="abs mono" style="left:634.4px;top:684px;height:24px;line-height:24px">...E@... ......A.</div>
<div class="abs mono" style="left:12.6px;top:708px;height:24px;line-height:24px;color:#a0a0a0">0020</div>
<div class="abs mono" style="left:77px;top:708px;height:24px;line-height:24px">e4 df 0d 2c 00 50 38 af  fe 14 11 4c 61 8c 50 18</div>
<div class="abs mono" style="left:634.4px;top:708px;height:24px;line-height:24px">...,.P8. ...La.P.</div>
<div class="abs mono" style="left:12.6px;top:732px;height:24px;line-height:24px;color:#a0a0a0">0030</div>
<div class="abs mono" style="left:77px;top:732px;height:24px;line-height:24px">25 bc a9 58 00 00 47 45  54 20 2f 64 6f 77 6e 6c</div>
<div class="abs mono" style="left:634.4px;top:732px;height:24px;line-height:24px">%..X..GE T /downl</div>
<div class="abs mono" style="left:12.6px;top:756px;height:24px;line-height:24px;color:#a0a0a0">0040</div>
<div class="abs mono" style="left:77px;top:756px;height:24px;line-height:24px">6f 61 64 2e 68 74 6d 6c  20 48 54 54 50 2f 31 2e</div>
<div class="abs mono" style="left:634.4px;top:756px;height:24px;line-height:24px">oad.html  HTTP/1.</div>
<div class="abs mono" style="left:12.6px;top:780px;height:24px;line-height:24px;color:#a0a0a0">0050</div>
<div class="abs mono" style="left:77px;top:780px;height:24px;line-height:24px">31 0d 0a 48 6f 73 74 3a  20 77 77 77 2e 65 74 68</div>
<div class="abs mono" style="left:634.4px;top:780px;height:24px;line-height:24px">1..Host:  www.eth</div>
<div class="abs mono" style="left:12.6px;top:804px;height:24px;line-height:24px;color:#a0a0a0">0060</div>
<div class="abs mono" style="left:77px;top:804px;height:24px;line-height:24px">65 72 65 61 6c 2e 63 6f  6d 0d 0a 55 73 65 72 2d</div>
<div class="abs mono" style="left:634.4px;top:804px;height:24px;line-height:24px">ereal.co m..User-</div>
<div class="abs mono" style="left:12.6px;top:828px;height:24px;line-height:24px;color:#a0a0a0">0070</div>
<div class="abs mono" style="left:77px;top:828px;height:24px;line-height:24px">41 67 65 6e 74 3a 20 4d  6f 7a 69 6c 6c 61 2f 35</div>
<div class="abs mono" style="left:634.4px;top:828px;height:24px;line-height:24px">Agent: M ozilla/5</div>
<div class="abs" style="left:1274px;top:659px;width:25px;height:202px;background:#f0f0f0"></div>
<div class="abs" style="left:1274px;top:685px;width:24px;height:40px;background:#cdcdcd"></div>
<svg class="abs" style="left:1280px;top:668px" width="14" height="11" viewBox="0 0 14 11"><path d="M6.6 0.9 L12.1 6.7 L12.1 9.9 L6.6 4.6 L1.1 9.9 L1.1 6.7 Z" fill="#5a5a5a"/></svg>
<svg class="abs" style="left:1280px;top:844px" width="14" height="11" viewBox="0 0 14 11"><path d="M6.6 10.1 L12.1 4.3 L12.1 1.1 L6.6 6.4 L1.1 1.1 L1.1 4.3 Z" fill="#5a5a5a"/></svg>
<span class="ui" style="left:112.5px;top:876px;letter-spacing:0.42px">http</span>
<span class="ui" style="left:722.65px;top:876px;letter-spacing:-0.432px">Packets: 43</span>
<span class="ui" style="left:810px;top:873px">·</span>
<span class="ui" style="left:819.65px;top:876px;letter-spacing:-0.12px">Displayed: 43 (100.0%)</span>
<span class="ui" style="left:994.5px;top:873px">·</span>
<span class="ui" style="left:1008.85px;top:876px;letter-spacing:-0.072px">Load time: 0:0.6</span>
<span class="ui" style="left:1154.4px;top:876px;letter-spacing:-0.156px">Profile: Default</span>
<svg class="abs" style="left:20px;top:870px" width="30" height="30" viewBox="0 0 30 30"><defs><radialGradient id="cg" cx="0.4" cy="0.3" r="0.8"><stop offset="0" stop-color="#c0f0f0"/><stop offset="1" stop-color="#8cdada"/></radialGradient></defs><circle cx="15" cy="15" r="12.9" fill="url(#cg)" stroke="#4e6c6c" stroke-width="2.2"/></svg>
<svg class="abs" style="left:64px;top:870px" width="29" height="30" viewBox="0 0 29 30"><defs><linearGradient id="stg" x1="0" y1="0" x2="1" y2="0.4"><stop offset="0" stop-color="#4aa6e0"/><stop offset="1" stop-color="#1c8ccf"/></linearGradient><linearGradient id="stp" x1="0" y1="0" x2="0" y2="1"><stop offset="0" stop-color="#fbfbf6"/><stop offset="1" stop-color="#ecece0"/></linearGradient></defs><rect x="0.4" y="1.2" width="21.2" height="27.3" rx="0.8" fill="url(#stp)" stroke="#c9c9c0" stroke-width="0.8"/><path d="M0.8 1.6 L15.4 1.6 Q16.6 1.6 16.6 2.8 L16.6 7.6 L0.8 7.6 Z" fill="url(#stg)"/><path d="M4.8 7.6 C5.8 5 7.8 3.4 10.6 2.6 C9.6 4.4 9.6 6 10.4 7.6 Z" fill="#f6f6f0"/><rect x="3.2" y="11.4" width="1.7" height="3.2" rx="0.8" fill="none" stroke="#a9a9a0" stroke-width="0.6"/><rect x="5.7" y="11.4" width="1.7" height="3.2" rx="0.8" fill="none" stroke="#a9a9a0" stroke-width="0.6"/><rect x="8.2" y="11.4" width="1.7" height="3.2" rx="0.8" fill="none" stroke="#a9a9a0" stroke-width="0.6"/><rect x="11.2" y="11.3" width="0.7" height="3.4" fill="#a9a9a0"/><rect x="13.7" y="11.3" width="0.7" height="3.4" fill="#a9a9a0"/><rect x="15.7" y="11.4" width="1.7" height="3.2" rx="0.8" fill="none" stroke="#a9a9a0" stroke-width="0.6"/><rect x="3.2" y="16.799999999999997" width="1.7" height="3.2" rx="0.8" fill="none" stroke="#a9a9a0" stroke-width="0.6"/><rect x="5.7" y="16.799999999999997" width="1.7" height="3.2" rx="0.8" fill="none" stroke="#a9a9a0" stroke-width="0.6"/><rect x="8.7" y="16.7" width="0.7" height="3.4" fill="#a9a9a0"/><rect x="10.7" y="16.799999999999997" width="1.7" height="3.2" rx="0.8" fill="none" stroke="#a9a9a0" stroke-width="0.6"/><rect x="13.7" y="16.7" width="0.7" height="3.4" fill="#a9a9a0"/><rect x="15.7" y="16.799999999999997" width="1.7" height="3.2" rx="0.8" fill="none" stroke="#a9a9a0" stroke-width="0.6"/><rect x="3.2" y="22.5" width="1.7" height="3.2" rx="0.8" fill="none" stroke="#a9a9a0" stroke-width="0.6"/><rect x="5.7" y="22.5" width="1.7" height="3.2" rx="0.8" fill="none" stroke="#a9a9a0" stroke-width="0.6"/><rect x="8.7" y="22.400000000000002" width="0.7" height="3.4" fill="#a9a9a0"/><rect x="11.2" y="22.400000000000002" width="0.7" height="3.4" fill="#a9a9a0"/><rect x="13.2" y="22.5" width="1.7" height="3.2" rx="0.8" fill="none" stroke="#a9a9a0" stroke-width="0.6"/><rect x="15.7" y="22.5" width="1.7" height="3.2" rx="0.8" fill="none" stroke="#a9a9a0" stroke-width="0.6"/><g transform="translate(-0.6,1)"><path d="M25.18 6.17 L22.02 2.83 L9.72 14.43 L12.88 17.77 Z" fill="#555753"/><path d="M24.75 3.45 L25.85 2.45" stroke="#555753" stroke-width="4.4" stroke-linecap="round"/><path d="M22.6 2.2 L25.8 5.6" stroke="#f4f4f0" stroke-width="0.9"/><path d="M12.88 17.77 L9.72 14.43 L9.2 15 L12.3 18.3 Z" fill="#f4f4f0"/><path d="M12.3 18.3 L9.2 15 L7 20.6 Z" fill="#000"/></g></svg>
<div class="abs" style="left:699px;top:869px;width:2px;height:34px;background:#a0a0a0"></div>
<div class="abs" style="left:707px;top:869px;width:2px;height:34px;background:#a0a0a0"></div>
<div class="abs" style="left:1131px;top:869px;width:2px;height:34px;background:#a0a0a0"></div>
<div class="abs" style="left:1139px;top:869px;width:2px;height:34px;background:#a0a0a0"></div>
<div class="abs" style="left:1268px;top:867px;width:1px;height:37px;background:#d4d4d4"></div>
<div class="abs" style="left:1294px;top:894px;width:3px;height:3px;background:#b8b8b8"></div>
<div class="abs" style="left:1290px;top:898px;width:3px;height:3px;background:#b8b8b8"></div>
<div class="abs" style="left:1294px;top:898px;width:3px;height:3px;background:#b8b8b8"></div>
<div class="abs" style="left:1286px;top:902px;width:3px;height:3px;background:#b8b8b8"></div>
<div class="abs" style="left:1290px;top:902px;width:3px;height:3px;background:#b8b8b8"></div>
<div class="abs" style="left:1294px;top:902px;width:3px;height:3px;background:#b8b8b8"></div>
</body></html>
